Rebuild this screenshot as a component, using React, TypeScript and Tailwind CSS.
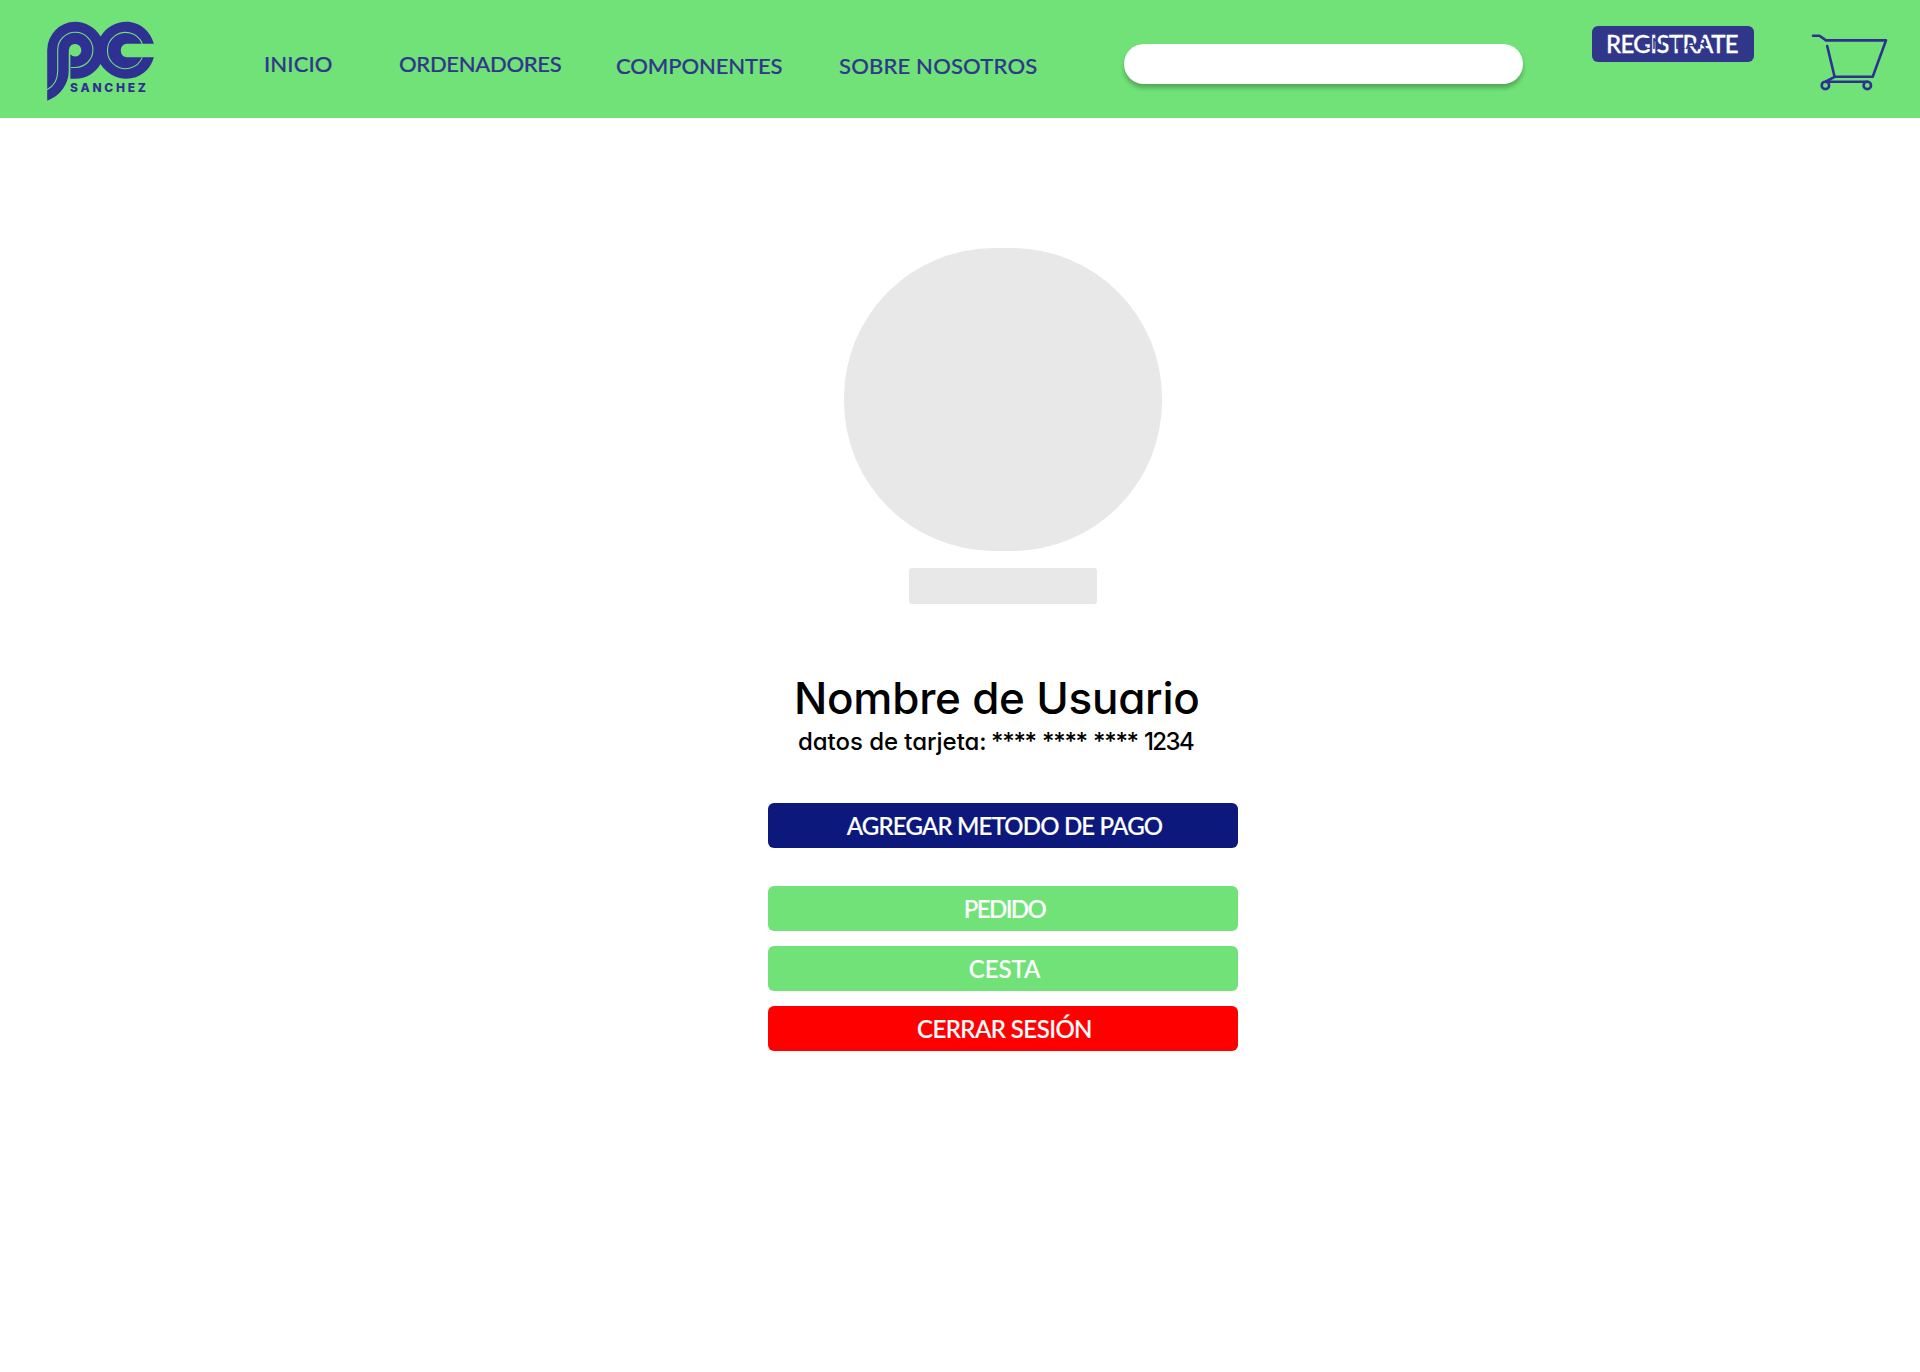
function Logo() {
  return (
    <svg className="ml-[40px] mt-[15px] h-[92px] w-[120px] shrink-0" viewBox="40 15 120 92" fill="none">
      <g fill="#2e3192">
        <path d="M47.2 50A28.3 28.3 0 0 1 75 21.8C85.500 21.800 95 27.500 100.700 36.500C106 27.500 116 21.800 126.500 21.800C139.500 21.800 150.500 31 153.900 43.800H126.400A6.800 6.800 0 0 0 126.400 57.200H153.900C150.500 70 139.500 78.700 126.500 78.700C116 78.700 106 73 100.500 64C95.500 73 86.500 78.700 75 78.700H70.300V54.300A6.300 6.300 0 1 0 68.800 50V71C68.800 84 60 96 47.200 100.700Z" />
      </g>
      <path d="M71 67.500H75A17.600 17.600 0 1 0 57.700 50V71C57.700 80 54 86 47 89.700" stroke="#70e277" strokeWidth="1.1" />
      <path d="M142.300 43.700A18.100 18.100 0 1 0 142.300 57.400" stroke="#70e277" strokeWidth="1.1" />
      <path d="M69.500 52V82" stroke="#70e277" strokeWidth="1.2" />
      <text x="70" y="91.600" fill="#2e3192" fontFamily="Inter" fontWeight="800" fontSize="12" textLength="76" lengthAdjust="spacing">
        SANCHEZ
      </text>
    </svg>
  );
}

function Cart() {
  return (
    <svg className="ml-[54px] mt-[30px] h-[64px] w-[84px] shrink-0" viewBox="1808 30 84 64" fill="none" stroke="#2e3192" strokeWidth="2.600" strokeLinejoin="round" strokeLinecap="round">
      <path d="M1813 35.800H1819.500L1826 40.400H1886L1872.700 76.800H1834.600L1827.200 46" />
      <path d="M1834.600 76.800L1826 81.500" />
      <path d="M1826 81.700H1867.300" />
      <circle cx="1825.400" cy="85.400" r="3.700" />
      <circle cx="1867.300" cy="85.400" r="3.700" />
    </svg>
  );
}

const navLink = "shrink-0 whitespace-nowrap text-[22px] leading-[24px] text-[#30378a] [-webkit-text-stroke:0.2px]";
const action =
  "h-[45px] w-[470px] rounded-[6px] pl-[3px] text-center text-[24px] font-medium leading-[43px] text-white [-webkit-text-stroke:0.2px]";

export default function App() {
  return (
    <div className="min-h-[1372px] w-[1920px] bg-white font-['Lato',sans-serif] font-medium">
      <header className="flex h-[118px] items-start bg-[#70e277]">
        <Logo />
        <a className={`${navLink} ml-[104px] mt-[52px] w-[135px] tracking-[0.1px]`}>INICIO</a>
        <a className={`${navLink} mt-[52px] w-[217px] tracking-[-0.3px]`}>ORDENADORES</a>
        <a className={`${navLink} mt-[53.5px] w-[223px] tracking-[-0.1px]`}>COMPONENTES</a>
        <a className={`${navLink} mt-[53.5px] w-[285px] tracking-[0.18px]`}>SOBRE NOSOTROS</a>
        <input
          aria-label="Buscar"
          className="mt-[44px] h-[40px] w-[399px] shrink-0 rounded-[20px] bg-white px-5 shadow-[0_4px_4px_rgba(0,0,0,0.25)] outline-none"
        />
        <div className="relative ml-[69px] mt-[26px] h-[36px] w-[162px] shrink-0 rounded-[6px] bg-[#30378a] pr-[2px] text-center text-[24px] leading-[36px] tracking-[-0.6px] text-white [-webkit-text-stroke:0.3px]">
          REGISTRATE
          <span className="absolute left-[50px] top-[9px] text-[16px] leading-[16px] tracking-[0.6px] text-[#30378a] [-webkit-text-stroke:0px]">
            ENTRAR
          </span>
        </div>
        <Cart />
      </header>

      <main className="ml-[768px] flex w-[470px] flex-col items-center">
        <div className="mt-[130px] h-[303px] w-[318px] rounded-[150px] bg-[#e8e8e8]" />
        <div className="mt-[17px] h-[36px] w-[188px] rounded-[3px] bg-[#e8e8e8]" />
        <div className="w-full font-['Inter',sans-serif] text-black [font-feature-settings:'cv11']">
          <h1 className="ml-[26px] mt-[68px] whitespace-nowrap text-[44px] font-medium leading-[52px] tracking-[-0.25px]">Nombre de Usuario</h1>
          <p className="ml-[30px] mt-[2px] flex whitespace-nowrap text-[24px] leading-[32px]">
            <span className="w-[193px] tracking-[-0.05px]">datos de tarjeta:</span>
            <span className="w-[51px] tracking-[-1.3px]">****</span>
            <span className="w-[51px] tracking-[-1.3px]">****</span>
            <span className="w-[51px] tracking-[-1.3px]">****</span>
            <span className="tracking-[-1.6px]">1234</span>
          </p>
        </div>
        <button className={`${action} mt-[45px] bg-[#0c187b] tracking-[-0.82px]`}>AGREGAR METODO DE PAGO</button>
        <button className={`${action} mt-[38px] bg-[#70e277] tracking-[-1.6px]`}>PEDIDO</button>
        <button className={`${action} mt-[15px] bg-[#70e277] tracking-[-0.1px]`}>CESTA</button>
        <button className={`${action} mt-[15px] bg-[#ff0000] tracking-[-0.55px]`}>CERRAR SESIÓN</button>
      </main>
    </div>
  );
}
